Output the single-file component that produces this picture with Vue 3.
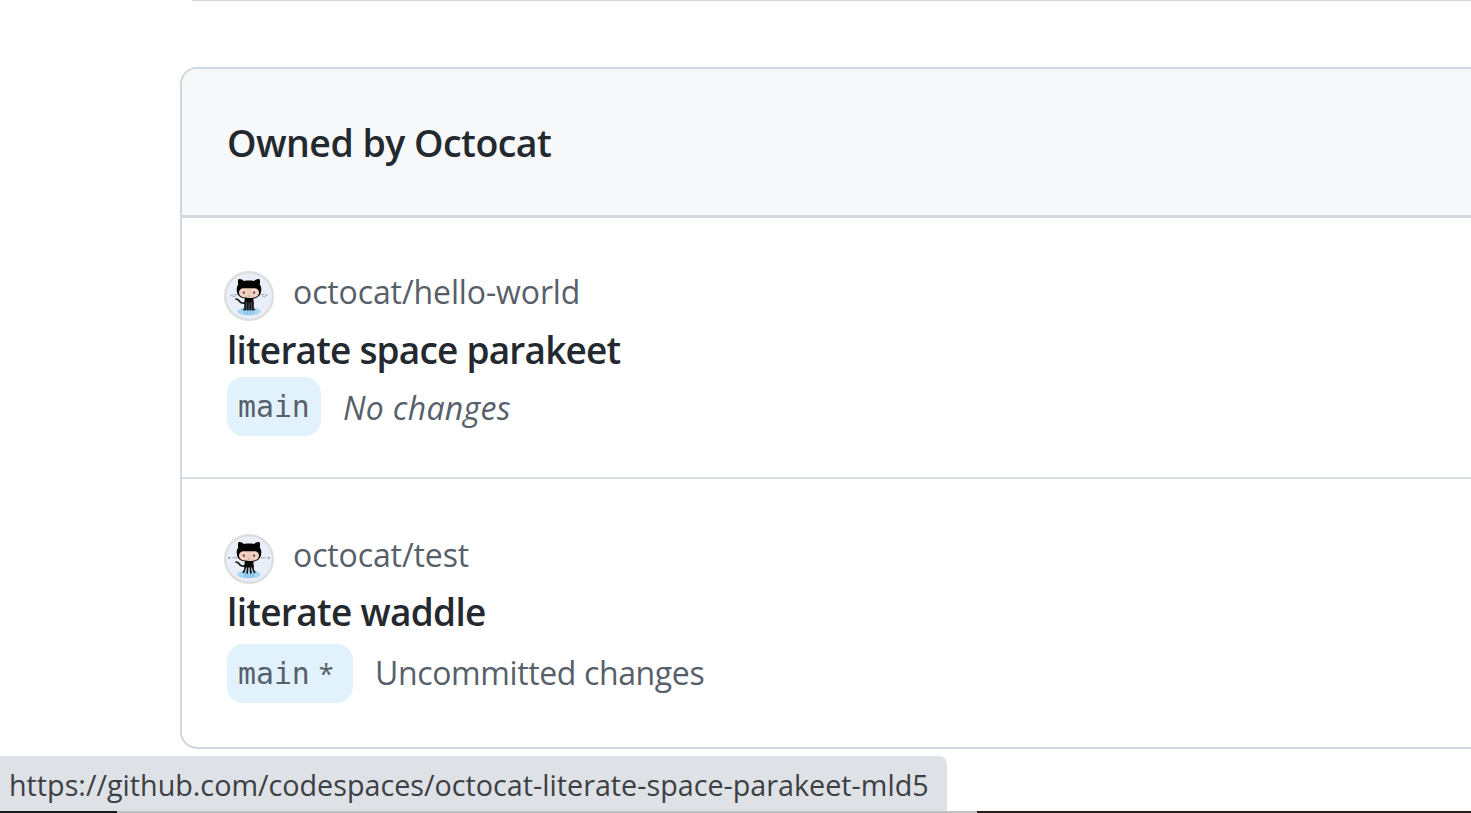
<script setup>
const codespaces = [
  { id: 1, repo: 'octocat/hello-world', name: 'literate space parakeet', branch: 'main', dirty: false, status: 'No changes' },
  { id: 2, repo: 'octocat/test', name: 'literate waddle', branch: 'main', dirty: true, status: 'Uncommitted changes' },
]
</script>

<template>
  <div class="page">
    <div class="previous-card"></div>
    <section class="card">
      <header class="card-header"><h2 class="heading">Owned by Octocat</h2></header>
      <article v-for="c in codespaces" :key="c.id" class="row" :class="{ dirty: c.dirty }">
        <div class="repo-line">
          <svg class="avatar" viewBox="0 0 50 50">
            <circle cx="25" cy="25" r="23.9" fill="#e9eef8" stroke="#dcdddd" stroke-width="2.2" />
            <ellipse cx="25" cy="40.3" rx="11.8" ry="4.1" fill="#a9d6f1" />
            <path d="M21 38v5M23.800 38v6M26.500 38v6M29.300 38v5" stroke="#79b8e8" stroke-width="1.2" />
            <path v-if="!c.dirty" d="M6 24.500l3-.3M9.500 23.400l4 .4M8.500 25.800l4-.9M44 24.500l-3-.3M40.500 23.400l-4 .4M41.500 25.800l-4-.9" stroke="#9a9fa9" stroke-width=".8" />
            <g v-else>
              <path d="M8.500 23.800h4.500M41.500 23.800h-4.500" stroke="#9098a8" stroke-width=".9" />
              <circle cx="5.300" cy="23.800" r="1.100" fill="#8790a3" /><circle cx="44.700" cy="23.800" r="1.100" fill="#8790a3" />
            </g>
            <path d="M12 28c2.200 0 2.600 1.200 3.600 2.500s2.400 1.700 5 1.500" fill="none" stroke="#15181b" stroke-width="1.700" stroke-linecap="round" />
            <path d="M20.800 27h8.400l.7 6.500H20.100z" fill="#080808" />
            <path v-if="c.dirty" d="M21.500 31c-.3 4-.7 6.600-2.800 7.800M23.600 32c0 4 0 6.300-.9 7.600M26.400 32c0 4 0 6.300.9 7.600M28.500 31c.3 4 .7 6.600 2.800 7.800" fill="none" stroke="#0c0d0f" stroke-width="1.700" />
            <g v-else>
              <path d="M20.500 31h9l.6 8H19.900z" fill="#15181c" />
              <path d="M18.800 38.700h12.400" stroke="#15181c" stroke-width="1.200" />
              <path d="M22.400 31v8M25 32v7.500M27.600 31v8" stroke="#626b75" stroke-width=".7" />
            </g>
            <path d="M14.400 8.200c1.800-.7 4.100.5 5.600 1.700 3.200-.6 6.800-.6 10 0 1.600-1.200 3.800-2.400 5.600-1.700.6 1.700.6 3.700.1 5.300 1.400 1.700 1.800 3.600 1.500 6.100-.5 6.200-4.500 8.200-12.200 8.200s-11.700-2-12.200-8.200c-.3-2.500.2-4.400 1.500-6.100-.5-1.600-.5-3.600.1-5.300z" fill="#000" />
            <path d="M17.700 17.500c2.500-.7 4.500-.2 7.300-.2s4.800-.5 7.300.2c2 1 2.900 2.700 2.700 4.600-.4 3.700-3.700 4.900-10 4.900s-9.600-1.200-10-4.900c-.2-1.900.7-3.600 2.700-4.600z" fill="#efcdbb" />
            <g fill="#f9eeea"><ellipse cx="19.800" cy="21.500" rx="2.300" ry="2.900" /><ellipse cx="30.200" cy="21.500" rx="2.300" ry="2.900" /></g>
            <g fill="#a4605b"><ellipse cx="19.900" cy="21.600" rx="1.400" ry="1.900" /><ellipse cx="30.100" cy="21.600" rx="1.400" ry="1.900" /></g>
            <path d="M24.300 25h1.400" stroke="#b87769" stroke-width=".8" />
          </svg>
          <span class="repo">{{ c.repo }}</span>
        </div>
        <h3 class="name">{{ c.name }}</h3>
        <div class="branch-line">
          <span class="branch">{{ c.branch }}<span v-if="c.dirty" class="star">*</span></span>
          <span class="status" :class="{ clean: !c.dirty }">{{ c.status }}</span>
        </div>
      </article>
    </section>
    <div class="url-tip"><span class="url">https://github.com/codespaces/octocat-literate-space-parakeet-mld5</span></div>
    <div class="edge"><i class="edge-left"></i><i class="edge-mid"></i><i class="edge-right"></i></div>
  </div>
</template>

<style>
body { margin: 0; overflow: hidden; background: #fff; }
</style>
<style scoped>
.page { position: relative; width: 100vw; height: 813px; overflow: hidden; box-sizing: border-box; background: #fff; font-family: "Open Sans", "Noto Sans", sans-serif; color: #24292f; }
.previous-card { height: 1px; margin-left: 192px; background: #d0d7de; }
.card { box-sizing: border-box; height: 682px; margin: 66px -20px 0 180px; border: 2px solid #d0d7de; border-radius: 17px; overflow: hidden; }
.card-header { box-sizing: border-box; height: 149px; padding: 47px 0 0 45px; background: #f6f8fa; border-bottom: 3px solid #d5dae0; }
h2, h3 { margin: 0; font-weight: 600; white-space: nowrap; }
.heading { font-size: 37.500px; line-height: 54px; letter-spacing: -0.53px; }
.row { box-sizing: border-box; height: 261px; padding: 53px 0 0 42px; border-bottom: 2px solid #d8dee4; }
.row.dirty { height: 268px; padding-top: 55px; border-bottom: 0; }
.repo-line { display: flex; height: 50px; gap: 19px; color: #57606a; }
.avatar { width: 50px; height: 50px; flex: none; }
.repo { font-size: 32px; line-height: 42px; letter-spacing: -0.12px; white-space: nowrap; }
.name { height: 56px; margin-left: 3px; font-size: 37px; line-height: 57px; letter-spacing: -0.8px; }
.dirty .name { height: 60px; line-height: 55px; letter-spacing: -0.68px; }
.branch-line { display: flex; align-items: flex-start; margin-left: 3px; gap: 22px; color: #57606a; }
.branch { box-sizing: border-box; display: flex; width: 94px; height: 59px; padding-left: 11px; border-radius: 16px; background: #e1f2fd; font-family: "DejaVu Sans Mono", monospace; font-size: 29.800px; line-height: 60px; }
.dirty .branch { width: 126px; }
.star { margin-left: 9px; font-family: "Open Sans", sans-serif; font-size: 27px; }
.status { font-size: 32px; line-height: 57px; letter-spacing: -0.38px; white-space: nowrap; }
.clean { font-style: italic; line-height: 62px; letter-spacing: 0.33px; }
.url-tip { position: absolute; left: 0; bottom: 2px; box-sizing: border-box; width: 947px; height: 55px; padding-left: 9px; border-top-right-radius: 8px; background: #dee1e6; color: #3c4043; }
.url { font-size: 28.730px; line-height: 57px; white-space: nowrap; }
.edge { position: absolute; left: 0; right: 0; bottom: 0; display: flex; height: 2px; }
.edge-left { width: 117px; background: #1d1d1e; }
.edge-mid { width: 860px; background: #c1c1c1; }
.edge-right { flex: 1; background: #2a1f1d; }
</style>
